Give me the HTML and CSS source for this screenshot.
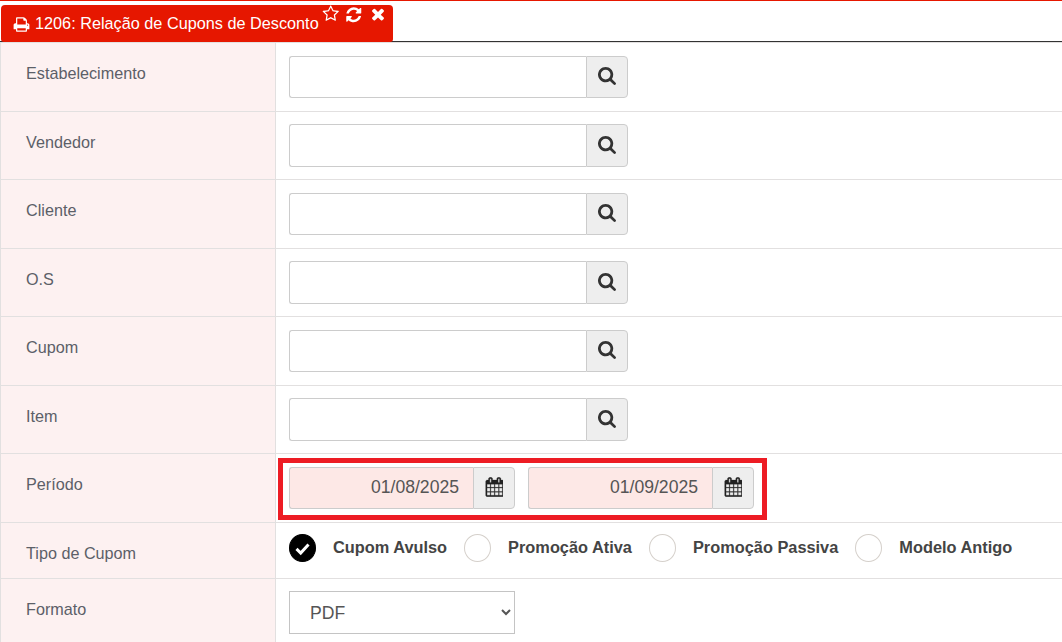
FILE: index.html
```html
<!DOCTYPE html>
<html lang="pt">
<head>
<meta charset="utf-8">
<title>1206: Relação de Cupons de Desconto</title>
<link rel="stylesheet" href="styles.css">
</head>
<body>
<svg class="sprite" aria-hidden="true">
  <symbol id="i-search" viewBox="0 0 1664 1792"><path d="M1152 704q0-185-131.500-316.500t-316.500-131.500-316.500 131.500-131.500 316.500 131.500 316.500 316.500 131.500 316.500-131.500 131.500-316.500zm512 832q0 52-38 90t-90 38q-54 0-90-38l-343-342q-179 124-399 124-143 0-273.500-55.500t-225-150-150-225-55.500-273.500 55.500-273.500 150-225 225-150 273.500-55.500 273.500 55.500 225 150 150 225 55.500 273.500q0 220-124 399l343 343q37 37 37 90z"/></symbol>
  <symbol id="i-print" viewBox="0 0 1792 1792"><path d="M448 1536h896v-256h-896v256zm0-640h896v-384h-160q-40 0-68-28t-28-68v-160h-640v640zm1152 64q0-26-19-45t-45-19-45 19-19 45 19 45 45 19 45-19 19-45zm128 0v416q0 13-9.500 22.500t-22.500 9.500h-224v160q0 40-28 68t-68 28h-960q-40 0-68-28t-28-68v-160h-224q-13 0-22.500-9.500t-9.500-22.500v-416q0-79 56.500-135.500t135.500-56.500h64v-544q0-40 28-68t68-28h672q40 0 88 20t76 48l152 152q28 28 48 76t20 88v256h64q79 0 135.500 56.500t56.500 135.500z"/></symbol>
  <symbol id="i-star" viewBox="0 0 1792 1792"><path d="M1201 1004l306-297-422-62-189-382-189 382-422 62 306 297-73 421 378-199 377 199zm527-357q0 22-26 48l-363 354 86 500q1 7 1 20 0 50-41 50-19 0-40-12l-449-236-449 236q-22 12-40 12-21 0-31.500-14.500t-10.500-35.500q0-6 2-20l86-500-364-354q-25-27-25-48 0-37 56-46l502-73 225-455q19-41 49-41t49 41l225 455 502 73q56 9 56 46z"/></symbol>
  <symbol id="i-refresh" viewBox="0 0 1792 1792"><path d="M1639 1056q0 5-1 7-64 268-268 434.500t-478 166.500q-146 0-282.500-55t-243.500-157l-129 129q-19 19-45 19t-45-19-19-45v-448q0-26 19-45t45-19h448q26 0 45 19t19 45-19 45l-137 137q71 66 161 102t187 36q134 0 250-65t186-179q11-17 53-117 8-23 30-23h192q13 0 22.500 9.500t9.500 22.500zm25-800v448q0 26-19 45t-45 19h-448q-26 0-45-19t-19-45 19-45l138-138q-148-137-349-137-134 0-250 65t-186 179q-11 17-53 117-8 23-30 23h-199q-13 0-22.500-9.500t-9.500-22.500v-7q65-268 270-434.500t480-166.500q146 0 284 55.500t245 156.500l130-129q19-19 45-19t45 19 19 45z"/></symbol>
  <symbol id="i-times" viewBox="0 0 1792 1792"><path d="M1490 1322q0 40-28 68l-136 136q-28 28-68 28t-68-28l-294-294-294 294q-28 28-68 28t-68-28l-136-136q-28-28-28-68t28-68l294-294-294-294q-28-28-28-68t28-68l136-136q28-28 68-28t68 28l294 294 294-294q28-28 68-28t68 28l136 136q28 28 28 68t-28 68l-294 294 294 294q28 28 28 68z"/></symbol>
  <symbol id="i-cal" viewBox="0 0 1664 1792"><path d="M192 1664h288v-288h-288v288zm352 0h320v-288h-320v288zm-352-352h288v-320h-288v320zm352 0h320v-320h-320v320zm-352-384h288v-288h-288v288zm736 736h320v-288h-320v288zm-384-736h320v-288h-320v288zm768 736h288v-288h-288v288zm-384-352h320v-320h-320v320zm-352-864v-288q0-13-9.500-22.500t-22.500-9.500h-64q-13 0-22.500 9.500t-9.500 22.500v288q0 13 9.500 22.500t22.500 9.500h64q13 0 22.500-9.500t9.500-22.500zm736 864h288v-320h-288v320zm-384-384h320v-288h-320v288zm384 0h288v-288h-288v288zm32-480v-288q0-13-9.500-22.500t-22.500-9.500h-64q-13 0-22.500 9.500t-9.500 22.500v288q0 13 9.500 22.500t22.500 9.500h64q13 0 22.500-9.500t9.500-22.500zm384-64v1280q0 52-38 90t-90 38h-1408q-52 0-90-38t-38-90v-1280q0-52 38-90t90-38h128v-96q0-66 47-113t113-47h64q66 0 113 47t47 113v96h384v-96q0-66 47-113t113-47h64q66 0 113 47t47 113v96h128q52 0 90 38t38 90z"/></symbol>
</svg>

<header class="tabbar">
  <div class="tab">
    <svg class="tab-print"><use href="#i-print"/></svg>
    <span class="tab-title">1206: Relação de Cupons de Desconto</span>
    <span class="tab-actions">
      <svg class="tab-star"><use href="#i-star"/></svg>
      <svg class="tab-refresh"><use href="#i-refresh"/></svg>
      <svg class="tab-times"><use href="#i-times"/></svg>
    </span>
  </div>
</header>

<main class="form">
  <div class="row">
    <div class="label">Estabelecimento</div>
    <div class="field"><div class="lookup"><input class="text" type="text"><span class="addon"><svg class="ico-search"><use href="#i-search"/></svg></span></div></div>
  </div>
  <div class="row">
    <div class="label">Vendedor</div>
    <div class="field"><div class="lookup"><input class="text" type="text"><span class="addon"><svg class="ico-search"><use href="#i-search"/></svg></span></div></div>
  </div>
  <div class="row">
    <div class="label">Cliente</div>
    <div class="field"><div class="lookup"><input class="text" type="text"><span class="addon"><svg class="ico-search"><use href="#i-search"/></svg></span></div></div>
  </div>
  <div class="row">
    <div class="label">O.S</div>
    <div class="field"><div class="lookup"><input class="text" type="text"><span class="addon"><svg class="ico-search"><use href="#i-search"/></svg></span></div></div>
  </div>
  <div class="row">
    <div class="label">Cupom</div>
    <div class="field"><div class="lookup"><input class="text" type="text"><span class="addon"><svg class="ico-search"><use href="#i-search"/></svg></span></div></div>
  </div>
  <div class="row">
    <div class="label">Item</div>
    <div class="field"><div class="lookup"><input class="text" type="text"><span class="addon"><svg class="ico-search"><use href="#i-search"/></svg></span></div></div>
  </div>
  <div class="row">
    <div class="label">Período</div>
    <div class="field field-dates">
      <div class="date"><input class="text text-date" type="text" value="01/08/2025"><span class="addon addon-date"><svg class="ico-cal"><use href="#i-cal"/></svg></span></div>
      <div class="date"><input class="text text-date" type="text" value="01/09/2025"><span class="addon addon-date"><svg class="ico-cal"><use href="#i-cal"/></svg></span></div>
      <div class="highlight"></div>
    </div>
  </div>
  <div class="row row-radio">
    <div class="label">Tipo de Cupom</div>
    <div class="field field-radio">
      <span class="radio radio-on"><svg viewBox="0 0 14 14"><path d="M3 7.300 5.800 10 11 4.400"/></svg></span><span class="radio-text">Cupom Avulso</span>
      <span class="radio"></span><span class="radio-text">Promoção Ativa</span>
      <span class="radio"></span><span class="radio-text">Promoção Passiva</span>
      <span class="radio"></span><span class="radio-text">Modelo Antigo</span>
    </div>
  </div>
  <div class="row row-last">
    <div class="label">Formato</div>
    <div class="field field-select">
      <select class="select"><option>PDF</option></select>
    </div>
  </div>
</main>
</body>
</html>
```

FILE: styles.css
```css
* { box-sizing: border-box; }
html, body { margin: 0; padding: 0; height: 100%; overflow: hidden; background: #fff; }
body { font-family: "Liberation Sans", Arial, sans-serif; color: #555; }
.sprite { display: none; }

.tabbar {
  height: 42px;
  border-top: 1px solid #e61700;
  border-bottom: 1px solid #333;
  padding: 4px 0 0 1px;
}
.tab {
  width: 392px;
  height: 37px;
  background: #e61700;
  border-radius: 4px 4px 3px 3px;
  color: #fff;
  display: flex;
  align-items: flex-start;
  padding-left: 12px;
}
.tab-print { width: 17px; height: 17px; fill: #fff; margin-top: 11px; flex: none; }
.tab-title { font-size: 16.250px; line-height: 36px; margin-left: 5px; white-space: nowrap; }
.tab-actions { display: flex; margin-left: 3.500px; }
.tab-actions svg { fill: #fff; flex: none; }
.tab-star { width: 17.500px; height: 17.500px; }
.tab-refresh { width: 17.500px; height: 17.500px; margin: 1px 0 0 5.750px; }
.tab-times { width: 18px; height: 18px; margin: 0 0 0 5.750px; }

.form { display: flex; flex-direction: column; border-top: 1px solid #e2e0e0; }
.row {
  display: flex;
  height: 68.500px;
  border-bottom: 1px solid #e2e0e0;
}
.row-radio { height: 56px; }
.row-last { height: 70px; border-bottom: 0; }
.label {
  width: 276px;
  flex: none;
  background: #fdf1f1;
  border-left: 1px solid #e2e0e0;
  border-right: 1px solid #e2e0e0;
  padding: 20px 0 0 25px;
  font-size: 16.200px;
  line-height: 20px;
  color: #5c5f68;
}

.field { flex: 1; padding: 12.500px 0 0 13px; display: flex; align-items: flex-start; position: relative; }
.lookup { display: flex; width: 339px; height: 42.500px; }
.text {
  flex: 1;
  min-width: 0;
  height: 100%;
  border: 1px solid #ccc;
  border-right: 0;
  border-radius: 3px 0 0 3px;
  background: #fff;
  outline: 0;
  padding: 0 14px;
  font: 17.600px "Liberation Sans", Arial, sans-serif;
  color: #555;
}
.addon {
  width: 42px;
  flex: none;
  height: 100%;
  background: #eee;
  border: 1px solid #ccc;
  border-radius: 0 4px 4px 0;
  display: flex;
  align-items: center;
  justify-content: center;
}
.ico-search { width: 18px; height: 19.400px; fill: #333; }

.field-dates { gap: 13px; }
.date { display: flex; height: 42.500px; width: 226px; }
.text-date { background: #fde8e6; text-align: right; }
.ico-cal { width: 18px; height: 20px; fill: #222; stroke: #222; stroke-width: 24; margin-bottom: 1px; }
.highlight {
  position: absolute;
  left: 2px;
  top: 4px;
  width: 489px;
  height: 62px;
  border: 5px solid #ed1c24;
  pointer-events: none;
}

.field-radio { padding-top: 11.500px; gap: 17px; }
.radio {
  width: 27px;
  height: 28px;
  flex: none;
  border-radius: 50%;
  border: 1px solid #d5d0cb;
  background: #fff;
}
.radio-on { background: #000; border-color: #000; display: flex; align-items: center; justify-content: center; }
.radio-on svg { width: 21px; height: 21px; fill: none; stroke: #fff; stroke-width: 2; }
.radio-text { font-size: 16.350px; font-weight: 700; line-height: 20px; color: #444; white-space: nowrap; margin-top: 3px; }

.field-select { padding-top: 12px; }
.select {
  width: 226px;
  height: 43px;
  border: 1px solid #c4c4c4;
  border-radius: 0;
  background: #fff;
  padding: 2px 0 0 16px;
  font: 17.600px "Liberation Sans", Arial, sans-serif;
  color: #555;
  outline: 0;
}
```
